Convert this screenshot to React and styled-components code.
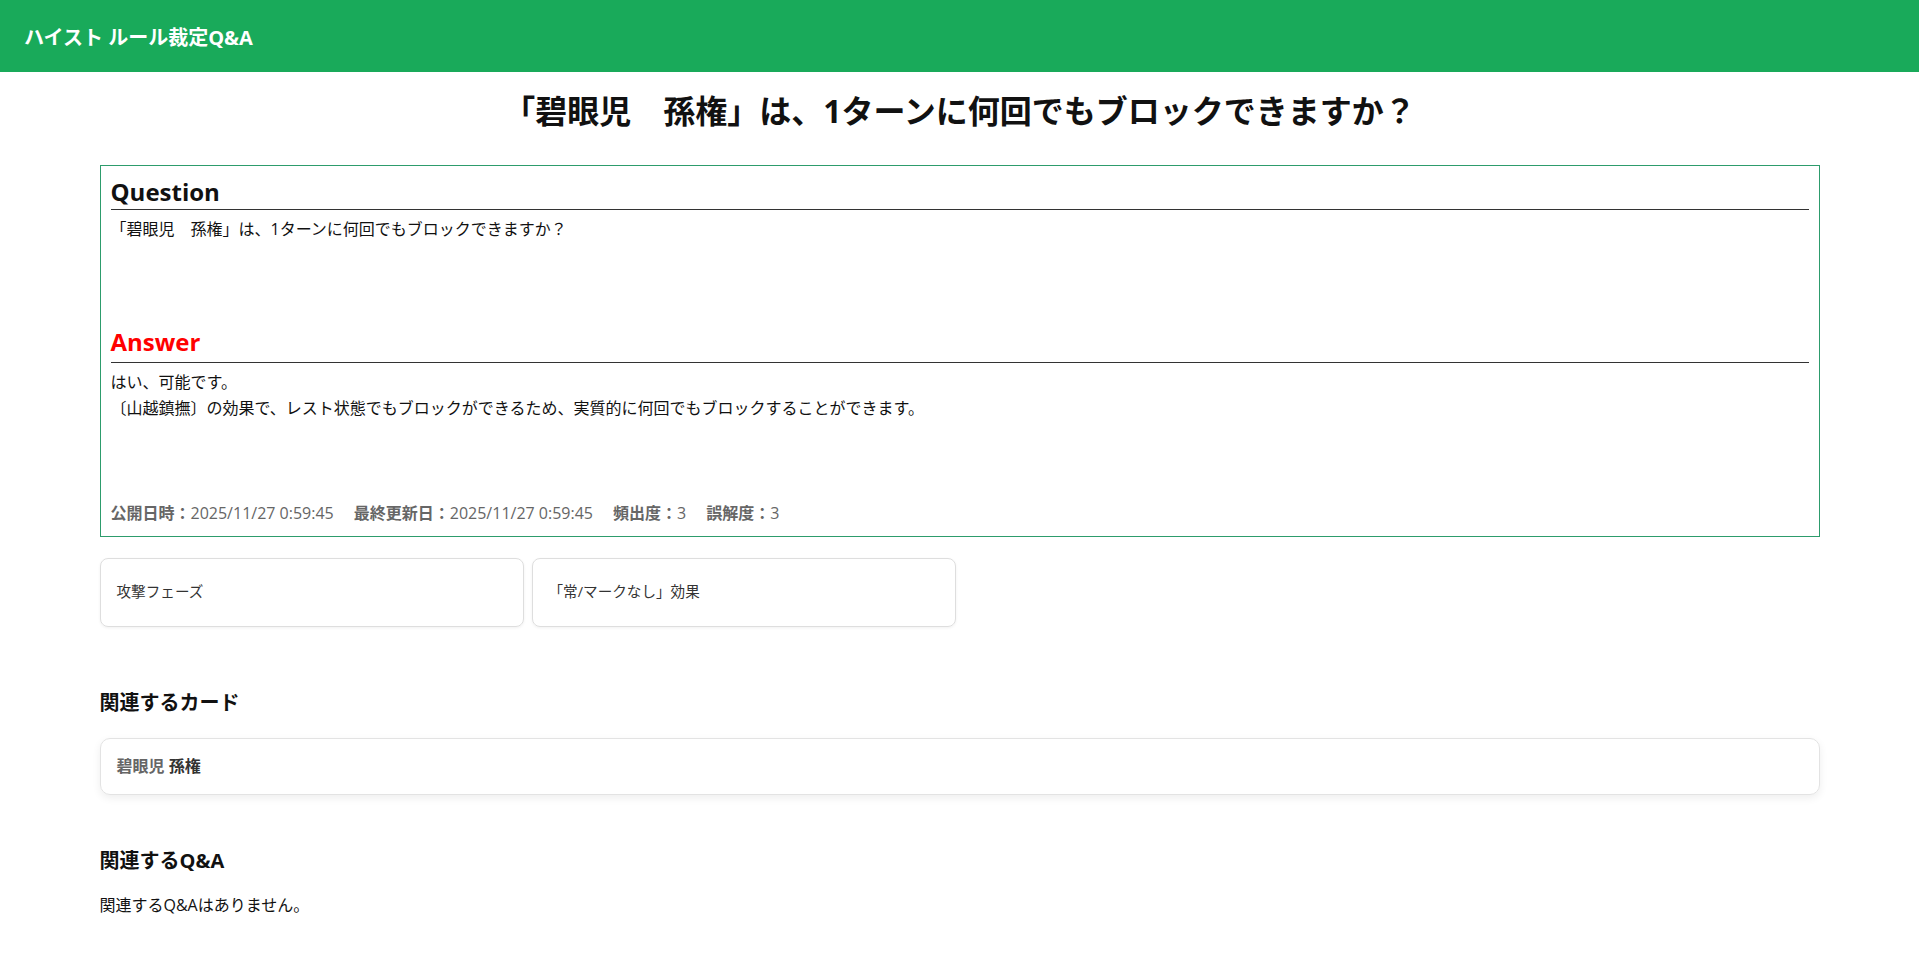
import React from "react";
import styled, { createGlobalStyle } from "styled-components";

const GlobalStyle = createGlobalStyle`
  body {
    margin: 0;
    background: #ffffff;
    color: #111;
    font-family: "Open Sans", "Noto Sans CJK JP", sans-serif;
  }
  * {
    box-sizing: border-box;
  }
`;

const Header = styled.header`
  height: 72px;
  background-color: #19aa5a;
  display: flex;
  align-items: center;
  padding: 0 24px;
`;

const SiteTitle = styled.div`
  color: #ffffff;
  font-size: 20px;
  font-weight: 700;
`;

const Main = styled.main`
  max-width: 1720px;
  margin: 0 auto;
  padding: 20px 0 40px;
`;

const PageTitle = styled.h1`
  margin: 0 0 35px;
  font-size: 32px;
  line-height: 38px;
  font-weight: 700;
  text-align: center;
  color: #111;
`;

const QaBox = styled.div`
  border: 1px solid #2d9c6c;
  padding: 10px;
`;

const BoxHeading = styled.h2`
  margin: 0;
  font-size: 24px;
  line-height: 1.3;
  font-weight: 700;
  color: ${(p) => p.color || "#111"};
  border-bottom: 1px solid #333;
  padding-bottom: ${(p) => p.gap || 2}px;
`;

const BoxBody = styled.div`
  margin-top: 6px;
  min-height: 110px;
  font-size: 16px;
  line-height: 26px;
  color: #111;
`;

const Meta = styled.div`
  margin-top: 21px;
  display: flex;
  gap: 20px;
  font-size: 16px;
  line-height: 26px;
  color: #666;
`;

const MetaLabel = styled.span`
  font-weight: 700;
`;

const TagGrid = styled.div`
  margin-top: 21px;
  display: grid;
  grid-template-columns: repeat(4, 1fr);
  gap: 8px;
`;

const TagCard = styled.div`
  border: 1px solid #dedede;
  border-radius: 8px;
  padding: 21px 16px 22px;
  font-size: 14.6px;
  line-height: 1.6;
  color: #333;
  box-shadow: 0 1px 3px rgba(0, 0, 0, 0.06);
`;

const Section = styled.section`
  margin-top: ${(p) => p.top}px;
`;

const SectionTitle = styled.h3`
  margin: 0 0 ${(p) => p.gap}px;
  font-size: 20px;
  line-height: 28px;
  font-weight: 700;
  color: #111;
`;

const RelatedCard = styled.div`
  border: 1px solid #e3e3e3;
  border-radius: 10px;
  padding: 15px 16px 16px;
  font-size: 16px;
  line-height: 24px;
  box-shadow: 0 3px 8px rgba(0, 0, 0, 0.07);
`;

const CardSub = styled.span`
  color: #666;
  font-weight: 600;
`;

const CardName = styled.span`
  color: #333;
  font-weight: 700;
`;

const EmptyText = styled.p`
  margin: 0;
  font-size: 16px;
  line-height: 26px;
  color: #111;
`;

const meta = [
  { label: "公開日時：", value: "2025/11/27 0:59:45" },
  { label: "最終更新日：", value: "2025/11/27 0:59:45" },
  { label: "頻出度：", value: "3" },
  { label: "誤解度：", value: "3" },
];

const tags = ["攻撃フェーズ", "「常/マークなし」効果"];

export default function App() {
  return (
    <>
      <GlobalStyle />
      <Header>
        <SiteTitle>ハイスト ルール裁定Q&amp;A</SiteTitle>
      </Header>
      <Main>
        <PageTitle>「碧眼児　孫権」は、1ターンに何回でもブロックできますか？</PageTitle>
        <QaBox>
          <BoxHeading>Question</BoxHeading>
          <BoxBody>「碧眼児　孫権」は、1ターンに何回でもブロックできますか？</BoxBody>
          <BoxHeading color="#ff0000" gap={5}>Answer</BoxHeading>
          <BoxBody>
            はい、可能です。
            <br />
            〔山越鎮撫〕の効果で、レスト状態でもブロックができるため、実質的に何回でもブロックすることができます。
          </BoxBody>
          <Meta>
            {meta.map((m) => (
              <span key={m.label}>
                <MetaLabel>{m.label}</MetaLabel>
                {m.value}
              </span>
            ))}
          </Meta>
        </QaBox>
        <TagGrid>
          {tags.map((t) => (
            <TagCard key={t}>{t}</TagCard>
          ))}
        </TagGrid>
        <Section top={62}>
          <SectionTitle gap={21}>関連するカード</SectionTitle>
          <RelatedCard>
            <CardSub>碧眼児</CardSub> <CardName>孫権</CardName>
          </RelatedCard>
        </Section>
        <Section top={52}>
          <SectionTitle gap={17}>関連するQ&amp;A</SectionTitle>
          <EmptyText>関連するQ&amp;Aはありません。</EmptyText>
        </Section>
      </Main>
    </>
  );
}
